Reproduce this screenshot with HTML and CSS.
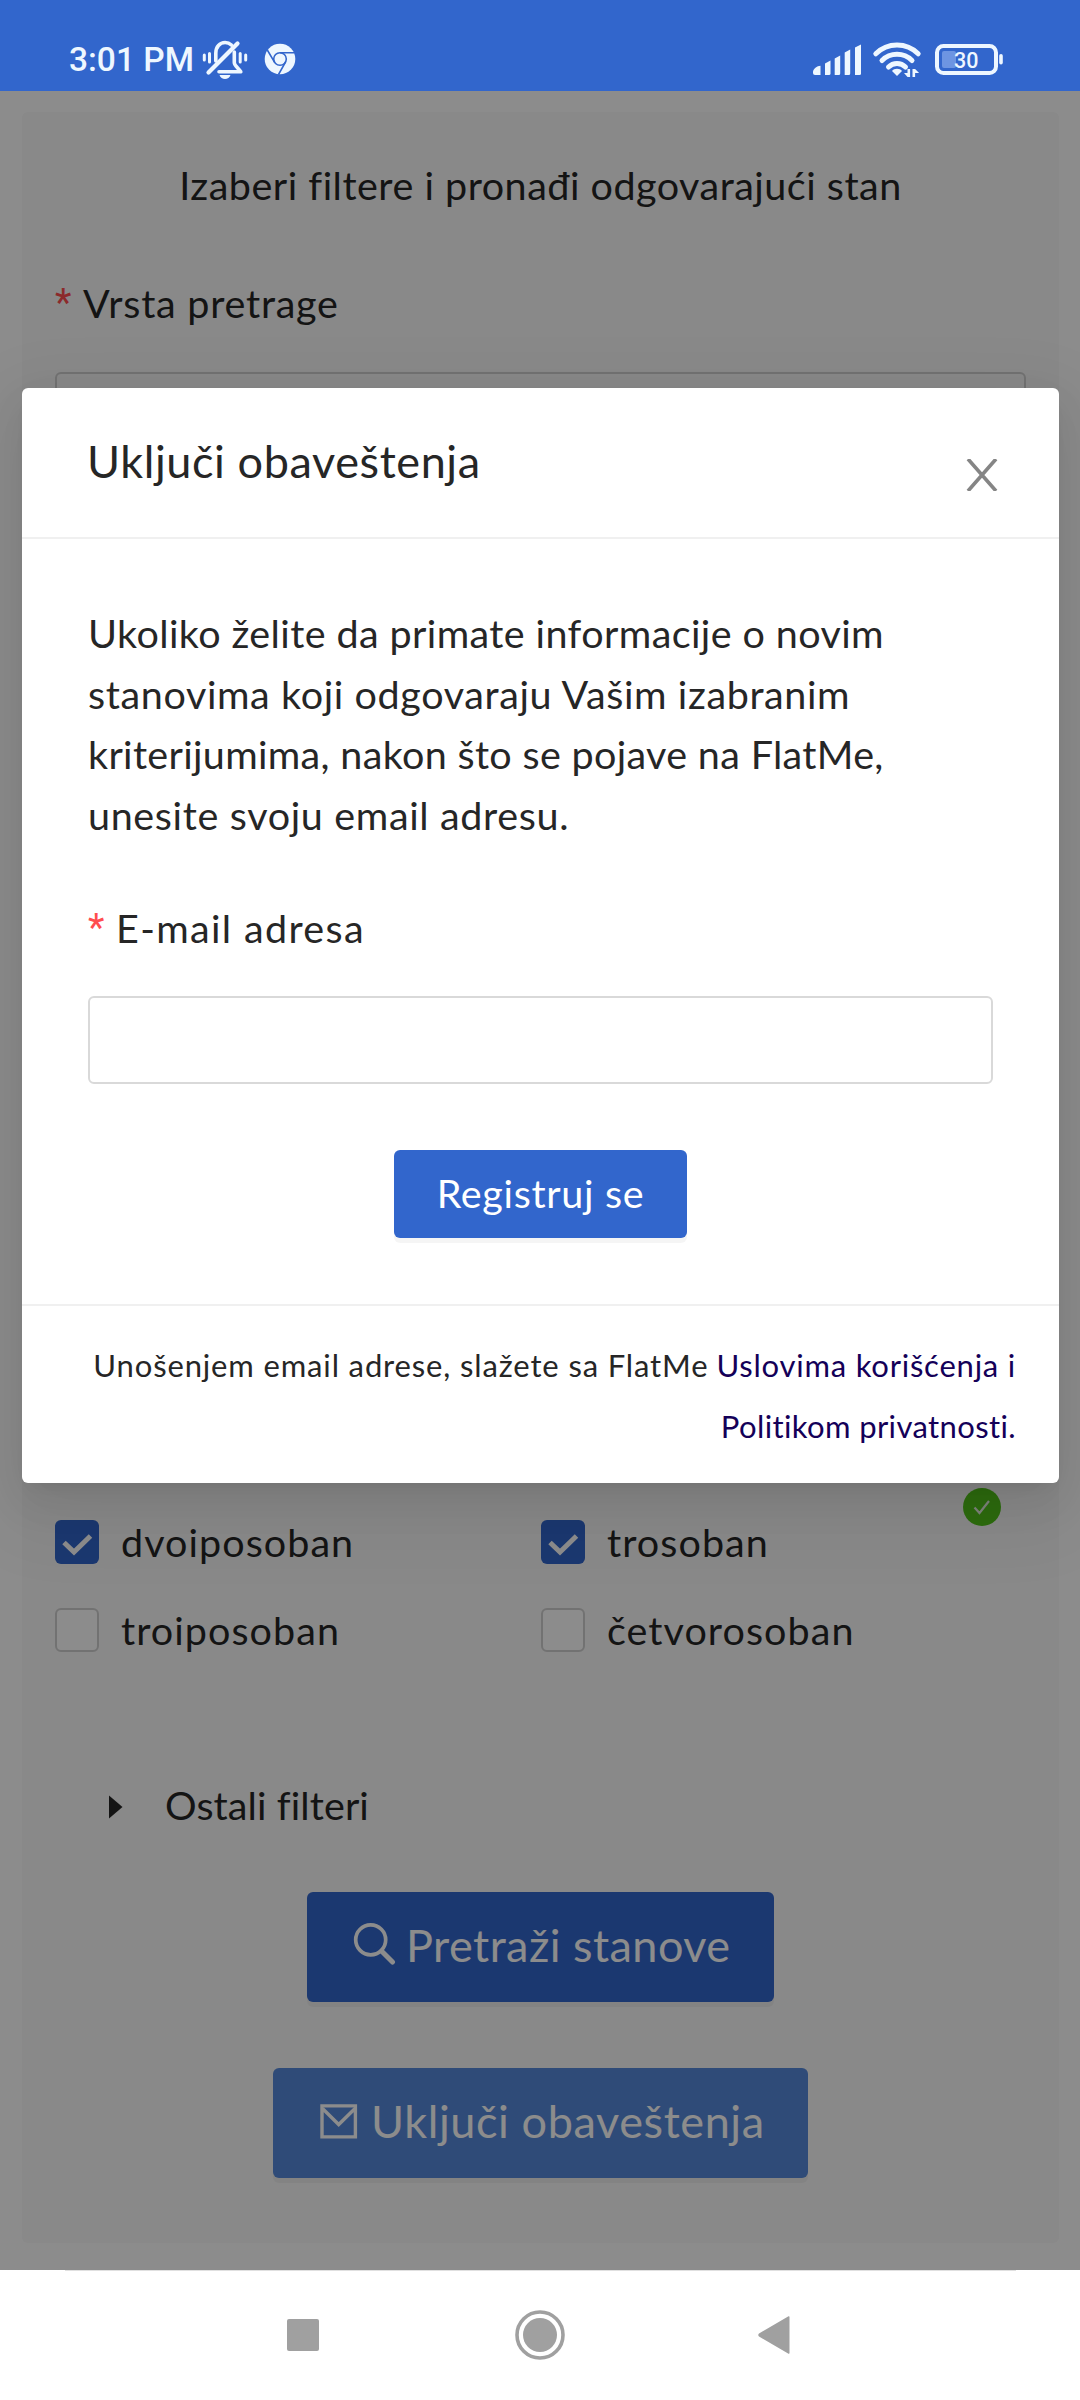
FILE: index.html
```html
<!DOCTYPE html>
<html lang="sr-Latn">
<head>
<meta charset="utf-8">
<title>FlatMe</title>
<link rel="stylesheet" href="styles.css">
</head>
<body>
<header class="status">
  <span class="clock">3:01 PM</span>
  <svg class="status-left" viewBox="202 36 96 48" width="96" height="48" fill="none" stroke="#eef7ff">
    <g stroke-width="3" stroke-linecap="round">
      <path d="M204.3 55v5M209.5 53.5v8.5M240.2 53.5v8.5M245.7 55v5"/>
    </g>
    <g stroke-width="3.6" stroke-linecap="round" stroke-linejoin="round">
      <path d="M208.5 72.5 237.5 43.5" stroke-width="4.2"/>
      <path d="M215.8 61V53c0-6 4-10.5 9.300-10.500 2.500 0 4.700 1 6.300 2.500"/>
      <path d="M234.300 52v10.500c0 3 4 5.500 6.500 9.300H219"/>
    </g>
    <path d="M219.500 75h11c-1.500 5.200-9.500 5.200-11 0z" fill="#eef7ff" stroke="none"/>
    <circle cx="280" cy="59" r="15.300" fill="#eef7ff" stroke="none"/>
    <g stroke="#3266cc" stroke-width="1.600">
      <circle cx="280" cy="59" r="6.300"/>
      <path d="M280 52.700h14.500M274.500 62.200 267.300 50M285.500 62.200 278.500 74.500"/>
    </g>
  </svg>
  <svg class="status-right" viewBox="810 36 196 48" width="196" height="48">
    <g fill="#eef7ff">
      <path d="M813 72c0-3 4-6.200 7.500-6.200V75H815a2 2 0 0 1-2-2z"/>
      <path d="M825 63.500l5.500-3V73.500a1.500 1.500 0 0 1-1.500 1.500h-4z"/>
      <path d="M834.700 58.500l5.500-3V73.500a1.500 1.500 0 0 1-1.500 1.500h-4z"/>
      <path d="M844.700 52.500l5.500-3V73.500a1.500 1.500 0 0 1-1.500 1.500h-4z"/>
      <path d="M855 47.500l6-3V73.500a1.500 1.500 0 0 1-1.500 1.500H855z"/>
      <path d="M897 76l-5-5c2-3 8-3 10 0z"/>
      <path d="M907.500 69h2.600v8h-2.600l-3.500-4h3.500zM912.500 77v-8h2.600l4 4h-4v4z"/>
      <rect x="999.200" y="54" width="3.600" height="10.500" rx="1.800"/>
    </g>
    <g fill="none" stroke="#eef7ff" stroke-width="5" stroke-linecap="round">
      <path d="M875.800 53.800a30 30 0 0 1 42.400 0M882 60.500a21.200 21.200 0 0 1 30 0M888.500 67a12 12 0 0 1 17 0"/>
    </g>
    <rect x="942" y="51" width="14" height="17" rx="2" fill="#6d95e2"/>
    <rect x="937" y="46" width="59" height="27" rx="6.500" fill="none" stroke="#eef7ff" stroke-width="4"/>
    <text class="battery" x="966.300" y="67.600" text-anchor="middle">30</text>
  </svg>
</header>

<main class="page">
  <section class="card">
    <h2 class="card-title t-heading">Izaberi filtere i pronađi odgovarajući stan</h2>
    <div class="label"><span class="req">*</span><span class="t-vrsta">Vrsta pretrage</span></div>
    <div class="select"></div>
    <svg class="valid" viewBox="0 0 38 38" width="38" height="38"><circle cx="19" cy="19" r="19" fill="#52c41a"/><path d="M11.500 19.500 16.500 25 26 13" fill="none" stroke="#e6efe0" stroke-width="2.200"/></svg>
    <div class="options">
      <div class="option"><i class="box on"><svg viewBox="0 0 44 44"><path d="M9 22.500 19 32 35.500 16" fill="none" stroke="#fff" stroke-width="5"/></svg></i><span class="t-opt">dvoiposoban</span></div>
      <div class="option"><i class="box on"><svg viewBox="0 0 44 44"><path d="M9 22.500 19 32 35.500 16" fill="none" stroke="#fff" stroke-width="5"/></svg></i><span class="t-opt">trosoban</span></div>
      <div class="option"><i class="box"></i><span class="t-opt">troiposoban</span></div>
      <div class="option"><i class="box"></i><span class="t-opt">četvorosoban</span></div>
    </div>
    <div class="more"><svg viewBox="0 0 14 24" width="14" height="24"><path d="M0 .5 13.500 12 0 23.500z" fill="#262626"/></svg><span class="t-more">Ostali filteri</span></div>
    <div class="btn search"><svg viewBox="0 0 43 43" width="43" height="43" fill="none" stroke="#fff"><circle cx="17.700" cy="17.800" r="15" stroke-width="3.700"/><path d="M29 29.500 39.500 40" stroke-width="5" stroke-linecap="round"/></svg><span class="t-search">Pretraži stanove</span></div>
    <div class="btn notify"><svg viewBox="0 0 38 35" width="38" height="35" fill="none" stroke="#fff" stroke-width="3.400"><path d="M2 1.900h33.400v31H2zM3 5l15.700 15.500L34.500 5"/></svg><span class="t-title">Uključi obaveštenja</span></div>
  </section>

  <div class="mask"></div>

  <section class="modal">
    <div class="modal-head">
      <h1 class="t-title">Uključi obaveštenja</h1>
      <svg viewBox="0 0 32 32" width="32" height="32" fill="none" stroke="#858585" stroke-width="3.600"><path d="M2 0 30 32M30 0 2 32"/></svg>
    </div>
    <div class="modal-body">
      <p class="intro"><span class="l1">Ukoliko želite da primate informacije o novim</span><span class="l2">stanovima koji odgovaraju Vašim izabranim</span><span class="l3">kriterijumima, nakon što se pojave na FlatMe,</span><span class="l4">unesite svoju email adresu.</span></p>
      <div class="label"><span class="req">*</span><span class="t-email">E-mail adresa</span></div>
      <div class="input"></div>
      <div class="submit t-submit">Registruj se</div>
    </div>
    <div class="modal-foot">
      <div><span class="t-terms">Unošenjem email adrese, slažete sa FlatMe</span> <a class="t-link">Uslovima korišćenja i</a></div>
      <div><a class="t-policy">Politikom privatnosti.</a></div>
    </div>
  </section>
</main>

<nav class="nav">
  <svg viewBox="0 0 32 32" width="32" height="32"><rect width="32" height="32" rx="2" fill="#a0a0a0"/></svg>
  <svg viewBox="0 0 50 50" width="50" height="50"><circle cx="25" cy="25" r="23" fill="none" stroke="#a0a0a0" stroke-width="3.600"/><circle cx="25" cy="25" r="17" fill="#a0a0a0"/></svg>
  <svg viewBox="0 0 32 38" width="32" height="38"><path d="M31.500 1v36a.8.8 0 0 1-1.400.5L1 20.500q-1.500-1.500 0-3L30.100.5a.8.8 0 0 1 1.400.5z" fill="#a0a0a0"/></svg>
</nav>
</body>
</html>
```
FILE: styles.css
```css
* { box-sizing: border-box; }
body { margin: 0; width: 1080px; height: 2400px; background: #fff; color: #262626; font-family: Lato, "Open Sans", sans-serif; font-size: 39.5px; line-height: 60px; overflow: hidden; }
h1, h2, p { margin: 0; font-weight: 400; }
svg { display: block; flex: none; }

.status { height: 91px; padding: 36px 0 0 69px; display: flex; background: #3266cc; }
.clock { width: 133px; font: 500 33.5px/48px Roboto, sans-serif; color: #eef7ff; }
.status-right { margin-left: 512px; }
.battery { font: 500 21.5px Roboto, sans-serif; fill: #eef7ff; }

.page { position: relative; height: 2179px; padding: 21px 21px 0 22px; background: #fff; }
.card { position: relative; height: 2131px; padding: 43px 33px 0; border-radius: 6px; background: #f9f9f9; }
.card-title { font-size: 39.5px; text-align: center; }
.label { display: flex; height: 60px; }
.req { width: 28px; color: #ff4d4f; font-family: Roboto, sans-serif; font-size: 38px; }
.card .label { margin-top: 58px; }
.select { height: 88px; margin-top: 39px; border: 2px solid #d0d0d0; border-radius: 6px; background: #f9f9f9; }
.valid { position: absolute; left: 941px; top: 1376px; }
.options { display: grid; grid-template-columns: 486px 1fr; grid-auto-rows: 88px; margin-top: 1038px; }
.option { display: flex; align-items: center; gap: 22px; }
.box { width: 44px; height: 44px; border: 2px solid #d0d0d0; border-radius: 6px; background: #fff; }
.box.on { border: 0; background: #3266cc; }
.option span, .more span { margin-top: -1px; }
.more { display: flex; align-items: center; height: 60px; margin-top: 101px; padding-left: 54px; gap: 42px; }
.more svg { margin-top: 4px; }
.btn { display: flex; align-items: center; height: 110px; margin: 0 auto; border-radius: 6px; background: #3266cc; color: #fff; font-size: 45px; box-shadow: 0 5px 0 rgba(0, 0, 0, .04); }
.btn span { margin-top: -4px; }
.search { width: 467px; margin-top: 57px; padding-left: 46px; gap: 10px; }
.search svg { margin-top: -8px; }
.notify { width: 535px; margin-top: 66px; padding-left: 47px; gap: 13px; background: #5689da; }
.notify svg { margin-top: -4px; }

.mask { position: absolute; inset: 0; background: rgba(0, 0, 0, .45); }

.modal { position: absolute; left: 22px; top: 297px; width: 1037px; height: 1095px; border-radius: 6px; background: #fff; box-shadow: 0 8px 16px -11px rgba(0, 0, 0, .12), 0 16px 44px rgba(0, 0, 0, .08), 0 25px 77px 22px rgba(0, 0, 0, .05); }
.modal-head { display: flex; justify-content: space-between; height: 151px; padding: 43px 61px 0 65px; border-bottom: 2px solid #f0f0f0; }
.modal-head h1 { font-size: 45px; }
.modal-head svg { margin-top: 28px; }
.modal-body { height: 765px; padding: 64px 66px 0; }
.intro { line-height: 60.5px; }
.intro span { display: block; white-space: nowrap; }
.modal .label { margin-top: 53px; }
.input { height: 88px; margin-top: 38px; border: 2px solid #d9d9d9; border-radius: 6px; }
.submit { width: 293px; height: 88px; margin: 66px auto 0; border-radius: 6px; background: #3266cc; color: #fff; text-align: center; line-height: 85px; box-shadow: 0 5px 0 rgba(0, 0, 0, .04); }
.modal-foot { height: 179px; padding: 29px 43px 0 0; border-top: 2px solid #f0f0f0; text-align: right; font-size: 31px; line-height: 61px; white-space: nowrap; }
.modal-foot a { color: #140058; }

/* tracking per text run */
.t-heading { letter-spacing: .5px; }
.t-vrsta { letter-spacing: .75px; }
.t-title { letter-spacing: .6px; }
.l1 { letter-spacing: .4px; }
.l2 { letter-spacing: .62px; }
.l3 { letter-spacing: .33px; }
.l4 { letter-spacing: .65px; }
.t-email { letter-spacing: 1.35px; }
.t-submit { letter-spacing: .67px; }
.t-terms { letter-spacing: .86px; }
.t-link { letter-spacing: .78px; }
.t-policy { letter-spacing: .38px; }
.t-opt { letter-spacing: 1.05px; }
.t-more { letter-spacing: .1px; }
.t-search { letter-spacing: .46px; }

.nav { position: relative; height: 130px; display: flex; align-items: center; padding-left: 287px; border-top: 1px solid #e4e4e4; border-image: linear-gradient(90deg, #fff 66px, #e0e0e0 66px, #e0e0e0 1015px, #fff 1015px) 1; }
.nav svg { margin-top: -1px; }
.nav svg:nth-child(2) { margin-left: 196px; }
.nav svg:nth-child(3) { margin-left: 192.5px; }
```
